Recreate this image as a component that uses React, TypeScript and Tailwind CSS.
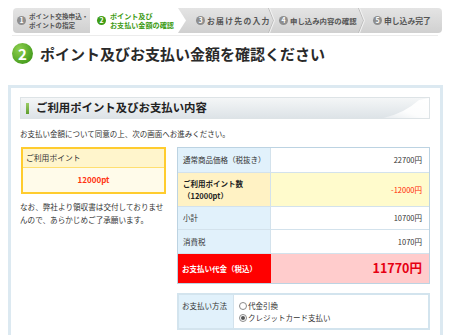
import React from "react";

function Chevron() {
  return (
    <svg width="7" height="25" viewBox="0 0 7 25" className="shrink-0">
      <polyline points="0.5,0 5.5,12.5 0.5,25" fill="none" stroke="#bdbdbd" strokeWidth="1" />
      <polyline points="1.5,0 6.5,12.5 1.5,25" fill="none" stroke="#f2f2f2" strokeWidth="1" />
    </svg>
  );
}

function Num({ n, active }: { n: string; active?: boolean }) {
  return (
    <div
      className={
        active
          ? "w-[9px] h-[9px] rounded-full bg-[#3f9d17] text-white text-[7px] font-bold flex items-center justify-center leading-none shrink-0"
          : "w-[9px] h-[9px] rounded-full bg-[#8e8e8e] text-white text-[7px] font-bold flex items-center justify-center leading-none shrink-0"
      }
    >
      {n}
    </div>
  );
}

function Radio({ checked }: { checked?: boolean }) {
  return (
    <div className="w-[8px] h-[8px] rounded-full border border-[#8a8a8a] bg-white flex items-center justify-center shrink-0">
      {checked ? <div className="w-[4px] h-[4px] rounded-full bg-[#555]" /> : null}
    </div>
  );
}

export default function App() {
  return (
    <div className="w-[450px] h-[335px] bg-white overflow-hidden font-['Noto_Sans_CJK_JP','Noto_Sans',sans-serif] text-[#333]">
      {/* step bar */}
      <div className="mt-[8px] ml-[13px] w-[429px] h-[25px] rounded-[4px] bg-linear-to-b from-[#e4e4e4] to-[#d0d0d0] flex items-stretch overflow-hidden">
        <div className="w-[77px] flex items-center pl-[4px] gap-[3px]">
          <Num n="1" />
          <div className="flex flex-col text-[6.6px] font-bold text-[#555] whitespace-nowrap">
            <span className="leading-[8.5px] block">ポイント交換申込・</span>
            <span className="leading-[8.5px] block">ポイントの指定</span>
          </div>
        </div>
        <div className="w-[96px] bg-white flex items-center pl-[7px] gap-[4px] [clip-path:polygon(0_0,calc(100%-8px)_0,100%_50%,calc(100%-8px)_100%,0_100%)]">
          <Num n="2" active />
          <div className="flex flex-col text-[7.1px] font-bold text-[#3c9a12] whitespace-nowrap">
            <span className="leading-[9px] block">ポイント及び</span>
            <span className="leading-[9px] block">お支払い金額の確認</span>
          </div>
        </div>
        <div className="w-[82px] flex items-center pl-[10px] gap-[2px]">
          <Num n="3" />
          <div className="text-[7.8px] tracking-[1.3px] leading-none font-bold text-[#555] whitespace-nowrap">お届け先の入力</div>
        </div>
        <Chevron />
        <div className="w-[83px] flex items-center pl-[4px] gap-[2px]">
          <Num n="4" />
          <div className="text-[7.4px] leading-none font-bold text-[#555] whitespace-nowrap">申し込み内容の確認</div>
        </div>
        <Chevron />
        <div className="flex-1 flex items-center pl-[8px] gap-[2px]">
          <Num n="5" />
          <div className="text-[7.8px] leading-none font-bold text-[#555] whitespace-nowrap">申し込み完了</div>
        </div>
      </div>
      <div className="mt-[2px] mx-[12px] h-px bg-[#ececec]" />

      {/* title */}
      <div className="mt-[7px] ml-[12px] flex items-center h-[21px]">
        <div className="w-[21px] h-[21px] rounded-full bg-radial-[at_35%_30%] from-[#8fd04f] to-[#2e8c0e] text-white text-[15px] font-bold flex items-center justify-center leading-none">
          2
        </div>
        <div className="ml-[7px] text-[15px] font-bold text-[#2a2a2a] leading-none whitespace-nowrap">
          ポイント及びお支払い金額を確認ください
        </div>
      </div>

      {/* panel */}
      <div className="mt-[21px] ml-[8px] w-[435px] h-[300px] border-[3px] border-[#dce9f1] bg-white pt-[9px] pl-[9px] pr-[10px]">
        <div className="relative h-[22px] border border-[#dde3e6] bg-linear-to-b from-[#f4f6f7] to-[#dde3e7] flex items-center overflow-hidden">
          <div className="ml-[5px] w-[3px] h-[11px] bg-linear-to-b from-[#9ccc65] to-[#5e9e2c]" />
          <div className="ml-[7px] text-[11.4px] font-bold text-[#222] leading-none whitespace-nowrap">
            ご利用ポイント及びお支払い内容
          </div>
          <svg className="absolute right-0 top-0" width="70" height="22" viewBox="0 0 70 22">
            <defs>
              <linearGradient id="sw" x1="0" y1="1" x2="1" y2="0">
                <stop offset="0" stopColor="#ffffff" stopOpacity="0" />
                <stop offset="0.5" stopColor="#ffffff" stopOpacity="0.9" />
                <stop offset="1" stopColor="#ffffff" stopOpacity="1" />
              </linearGradient>
            </defs>
            <path d="M10 22 Q40 20 60 2 L70 0 L70 22 Z" fill="url(#sw)" />
          </svg>
        </div>

        <div className="mt-[10px] text-[7.5px] leading-[10px] whitespace-nowrap">
          お支払い金額について同意の上、次の画面へお進みください。
        </div>

        <div className="mt-[8px] flex items-start">
          {/* left */}
          <div className="ml-[1px] w-[145px]">
            <div className="border-2 border-[#ffcc2e]">
              <div className="h-[19px] bg-[#fff5cc] border-b border-[#ffdf70] flex items-center pl-[3px] text-[7.8px] leading-none">
                ご利用ポイント
              </div>
              <div className="h-[24px] bg-[#fffbea] flex items-center justify-center text-[8px] font-bold text-[#ff3311] leading-none">
                12000pt
              </div>
            </div>
            <div className="mt-[6px] -ml-[1px] text-[7.6px] leading-[13px] w-[150px]">
              なお、弊社より領収書は交付しておりませ
              <br />
              んので、あらかじめご了承願います。
            </div>
          </div>

          {/* right */}
          <div className="ml-[11px] w-[253px]">
            <div className="border border-[#bcd3e2] text-[7.5px] leading-[10px]">
              <div className="flex h-[25px] border-b border-[#d3e2ec]">
                <div className="w-[93px] bg-[#e1f1fb] border-r border-[#d3e2ec] flex items-center pl-[5px] whitespace-nowrap">
                  通常商品価格（税抜き）
                </div>
                <div className="flex-1 bg-white flex items-center justify-end pr-[7px]">22700円</div>
              </div>
              <div className="flex h-[34px] border-b border-[#d3e2ec]">
                <div className="w-[93px] bg-[#fff2c4] border-r border-[#d3e2ec] flex flex-col justify-center pl-[5px] font-bold text-[#222] leading-[12px] whitespace-nowrap">
                  <div>ご利用ポイント数</div>
                  <div>（12000pt）</div>
                </div>
                <div className="flex-1 bg-[#fffbcc] flex items-center justify-end pr-[7px] text-[#ff2200]">-12000円</div>
              </div>
              <div className="flex h-[23px] border-b border-[#d3e2ec]">
                <div className="w-[93px] bg-[#e1f1fb] border-r border-[#d3e2ec] flex items-center pl-[5px]">小計</div>
                <div className="flex-1 bg-white flex items-center justify-end pr-[7px]">10700円</div>
              </div>
              <div className="flex h-[24px] border-b border-[#d3e2ec]">
                <div className="w-[93px] bg-[#e1f1fb] border-r border-[#d3e2ec] flex items-center pl-[5px]">消費税</div>
                <div className="flex-1 bg-white flex items-center justify-end pr-[7px]">1070円</div>
              </div>
              <div className="flex h-[29px]">
                <div className="w-[93px] bg-[#ff0000] flex items-center pl-[4px] text-white font-bold whitespace-nowrap">
                  お支払い代金（税込）
                </div>
                <div className="flex-1 bg-[#ffcccc] flex items-center justify-end pr-[7px] text-[12.5px] font-bold text-[#e60012] leading-none">
                  11770円
                </div>
              </div>
            </div>

            <div className="mt-[9px] h-[37px] border-2 border-[#d3e4ee] flex text-[7.5px] leading-[12px]">
              <div className="w-[55px] bg-[#e1f1fb] border-r border-[#d3e2ec] pl-[3px] pt-[5px] whitespace-nowrap">お支払い方法</div>
              <div className="flex-1 bg-white pl-[5px] pt-[5px]">
                <div className="flex items-center gap-[1px] h-[12px]">
                  <Radio />
                  <span>代金引換</span>
                </div>
                <div className="flex items-center gap-[1px] h-[12px]">
                  <Radio checked />
                  <span>クレジットカード支払い</span>
                </div>
              </div>
            </div>
          </div>
        </div>
      </div>
    </div>
  );
}
